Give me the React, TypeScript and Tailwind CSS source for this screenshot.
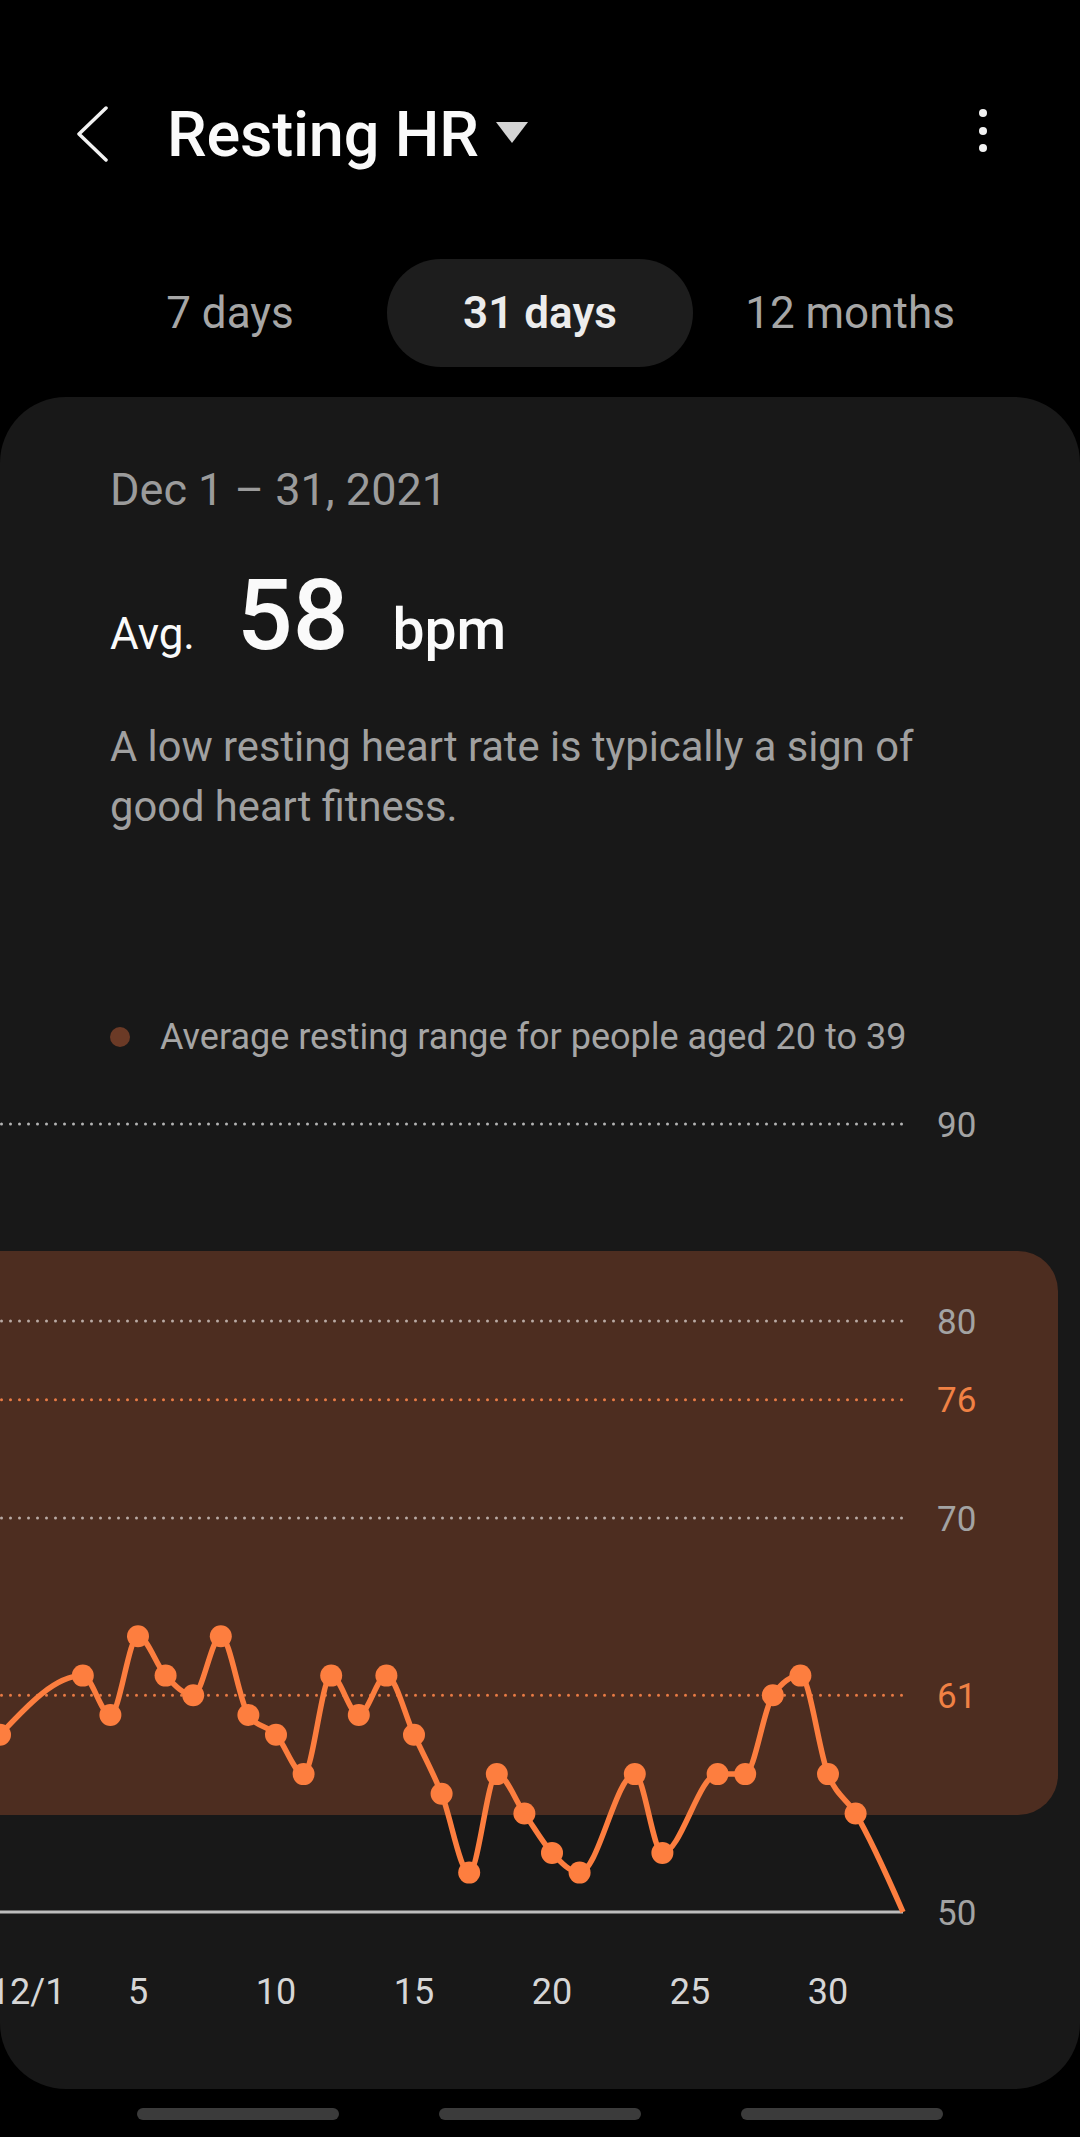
import React from "react";

type P = [number, number];

const DATA: P[] = [
  [0, 59], [3, 62], [4, 60], [5, 64], [6, 62], [7, 61], [8, 64], [9, 60], [10, 59],
  [11, 57], [12, 62], [13, 60], [14, 62], [15, 59], [16, 56], [17, 52], [18, 57],
  [19, 55], [20, 53], [21, 52], [23, 57], [24, 53], [26, 57], [27, 57], [28, 61],
  [29, 62], [30, 57], [31, 55],
];

const TOP = 1100;
const X = (d: number) => 27.6 * d;
const Y = (v: number) => 1912 - TOP - (v - 50) * 19.7;

function monotone(p: P[]): string {
  const n = p.length;
  const h: number[] = [];
  const s: number[] = [];
  for (let i = 0; i < n - 1; i++) {
    h[i] = p[i + 1][0] - p[i][0];
    s[i] = (p[i + 1][1] - p[i][1]) / h[i];
  }
  const t: number[] = new Array(n).fill(0);
  for (let i = 1; i < n - 1; i++) {
    const s0 = s[i - 1];
    const s1 = s[i];
    const pp = (s0 * h[i] + s1 * h[i - 1]) / (h[i - 1] + h[i]);
    t[i] = (Math.sign(s0) + Math.sign(s1)) * Math.min(Math.abs(s0), Math.abs(s1), 0.5 * Math.abs(pp)) || 0;
  }
  t[0] = (3 * s[0] - t[1]) / 2;
  t[n - 1] = (3 * s[n - 2] - t[n - 2]) / 2;
  let d = `M${p[0][0]},${p[0][1]}`;
  for (let i = 0; i < n - 1; i++) {
    const [x0, y0] = p[i];
    const [x1, y1] = p[i + 1];
    const k = h[i] / 3;
    d += ` C${x0 + k},${y0 + t[i] * k} ${x1 - k},${y1 - t[i + 1] * k} ${x1},${y1}`;
  }
  return d;
}

function Chart() {
  const pts: P[] = DATA.map(([d, v]) => [X(d), Y(v)]);
  const linePts: P[] = [...pts, [903, Y(50)]];
  const path = monotone(linePts);
  const grid = [
    { v: 90, c: "#b4b4b4", t: "#a3a3a3" },
    { v: 80, c: "#b9aaa4", t: "#a3a3a3" },
    { v: 76, c: "#e97b45", t: "#f08144" },
    { v: 70, c: "#b9aaa4", t: "#a3a3a3" },
    { v: 61, c: "#e97b45", t: "#f08144" },
  ];
  const xl: [string, number][] = [
    ["12/1", 1], ["5", 5], ["10", 10], ["15", 15], ["20", 20], ["25", 25], ["30", 30],
  ];
  const bandTop = 1251 - TOP;
  const bandBot = 1815 - TOP;
  return (
    <svg width={1080} height={940} viewBox="0 0 1080 940" className="block">
      <path
        d={`M-10 ${bandTop} H1018 A40 40 0 0 1 1058 ${bandTop + 40} V${bandBot - 40} A40 40 0 0 1 1018 ${bandBot} H-10 Z`}
        fill="#4d2d20"
      />
      {grid.map((g) => (
        <g key={g.v}>
          <line
            x1={1.5}
            x2={902}
            y1={Y(g.v)}
            y2={Y(g.v)}
            stroke={g.c}
            strokeWidth={3}
            strokeLinecap="round"
            strokeDasharray="0 9"
          />
          <text x={937} y={Y(g.v) + 12.5} fontSize={35} fill={g.t}>
            {g.v}
          </text>
        </g>
      ))}
      <line x1={0} x2={903} y1={Y(50)} y2={Y(50)} stroke="#bdbdbd" strokeWidth={3} />
      <text x={937} y={Y(50) + 13} fontSize={35} fill="#a3a3a3">
        50
      </text>
      <path d={path} fill="none" stroke="#fd7e3f" strokeWidth={5.5} strokeLinejoin="round" />
      {pts.map(([x, y], i) => (
        <circle key={i} cx={x} cy={y} r={11} fill="#fd7e3f" />
      ))}
      {xl.map(([t, d]) => (
        <text key={t} x={X(d)} y={2004 - TOP} fontSize={36} fill="#d6d6d6" textAnchor="middle">
          {t}
        </text>
      ))}
    </svg>
  );
}

export default function App() {
  return (
    <div className="min-h-[2137px] w-[1080px] bg-black font-['Roboto','Noto_Sans',sans-serif] overflow-hidden">
      {/* Header */}
      <div className="flex items-start pt-[105px]">
        <svg width={32} height={56} viewBox="0 0 32 56" className="ml-[76px] mt-[1px] shrink-0">
          <path d="M30 2 L3 28 L30 54" fill="none" stroke="#f2f2f2" strokeWidth={3.5} strokeLinecap="round" strokeLinejoin="round" />
        </svg>
        <div className="ml-[59px] text-[63px] leading-[60px] font-medium text-[#fafafa] tracking-[-0.2px]">
          Resting HR
        </div>
        <svg width={32} height={21} viewBox="0 0 32 21" className="ml-[17px] mt-[17px] shrink-0">
          <polygon points="0,0 32,0 16,21" fill="#d4d4d4" />
        </svg>
        <div className="ml-auto mr-[93px] mt-[4px] flex flex-col gap-[9.5px]">
          <div className="w-[8px] h-[8px] rounded-full bg-[#f2f2f2]" />
          <div className="w-[8px] h-[8px] rounded-full bg-[#f2f2f2]" />
          <div className="w-[8px] h-[8px] rounded-full bg-[#f2f2f2]" />
        </div>
      </div>

      {/* Tabs */}
      <div className="mt-[94px] grid grid-cols-3 px-[75px] text-[44px]">
        <div className="h-[108px] flex items-center justify-center text-[#a6a6a6]">7 days</div>
        <div className="h-[108px] mx-[2px] rounded-full bg-[#1d1d1d] flex items-center justify-center text-[#ececec] font-semibold">
          31 days
        </div>
        <div className="h-[108px] flex items-center justify-center text-[#a6a6a6]">12 months</div>
      </div>

      {/* Card */}
      <div className="mt-[30px] bg-[#181818] rounded-[66px] pt-[68px] pb-[49px]">
        <div className="px-[110px]">
          <div className="text-[45px] leading-[50px] text-[#9b9b9b]">Dec 1 – 31, 2021</div>
          <div className="mt-[52px] flex items-baseline text-[#fafafa]">
            <span className="text-[44px] leading-none">Avg.</span>
            <span className="ml-[42px] text-[98px] leading-none font-medium">58</span>
            <span className="ml-[44px] text-[57px] leading-none font-medium">bpm</span>
          </div>
          <div className="mt-[52px] text-[41.7px] leading-[60px] text-[#a0a0a0]">
            A low resting heart rate is typically a sign of good heart fitness.
          </div>
          <div className="mt-[180px] flex items-center">
            <div className="w-[20px] h-[20px] rounded-full bg-[#6b3a26] shrink-0" />
            <div className="ml-[30px] text-[36px] leading-[40px] text-[#a5a5a5] whitespace-nowrap">
              Average resting range for people aged 20 to 39
            </div>
          </div>
        </div>
        <div className="mt-[43px]">
          <Chart />
        </div>
      </div>

      {/* Bottom indicators */}
      <div className="mt-[19px] flex justify-center gap-[100px]">
        <div className="w-[202px] h-[12px] rounded-full bg-[#3b3b3b]" />
        <div className="w-[202px] h-[12px] rounded-full bg-[#3b3b3b]" />
        <div className="w-[202px] h-[12px] rounded-full bg-[#3b3b3b]" />
      </div>
    </div>
  );
}
